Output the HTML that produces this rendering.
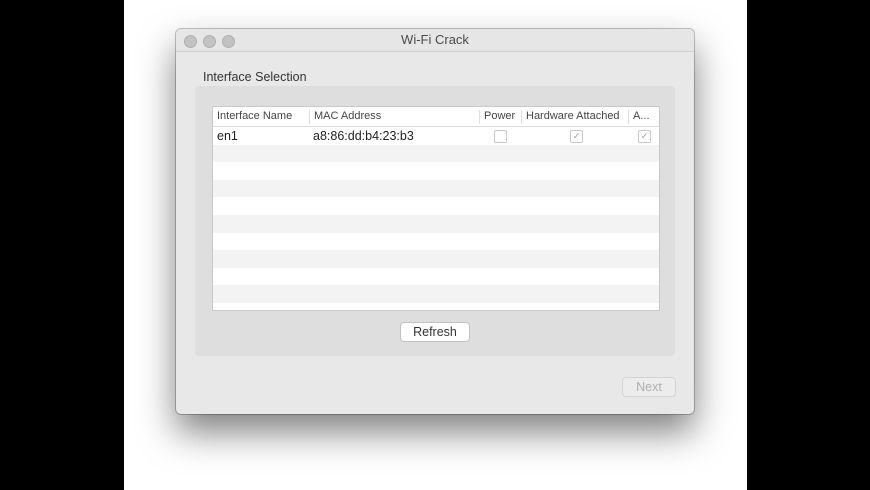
<!DOCTYPE html>
<html><head><style>
body{margin:0;width:870px;height:490px;background:#000;position:relative;overflow:hidden;font-family:"Liberation Sans",sans-serif}
.page{position:absolute;left:124px;top:0;width:623px;height:490px;background:#fff}
.win{position:absolute;left:176px;top:29px;width:518px;height:385px;background:#e8e8e8;border-radius:5px;box-shadow:0 18px 36px rgba(0,0,0,.5),0 0 0 1px #c4c4c4}
.tb{height:22px;border-bottom:1px solid #d0d0d0;background:#e6e6e6;border-radius:5px 5px 0 0;text-align:center;font-size:13px;line-height:22px;color:#4a4a4a}
.dot{position:absolute;top:6px;width:11px;height:11px;border-radius:50%;background:#c2c2c2;border:0.5px solid #b0b0b0}
.lbl{position:absolute;left:27px;top:41px;font-size:12.5px;color:#333}
.grp{position:absolute;left:19px;top:57px;width:480px;height:270px;background:#dedede;border-radius:4px}
.tbl{position:absolute;left:36px;top:77px;width:446px;height:203px;background:#fff;border:1px solid #c8c8c8;overflow:hidden}
.hd{height:19px;border-bottom:1px solid #ddd;font-size:11px;color:#444;position:relative}
.hd span{position:absolute;top:3px;padding-left:4px;border-left:1px solid #ddd;height:14px}
.row{height:17.6px;position:relative;font-size:12.5px;color:#222}
.row:nth-child(odd){background:#f3f3f3}
.cb{position:absolute;top:3px;width:11px;height:11px;border:1px solid #c8c8c8;border-radius:2px;background:#fff;font-size:9px;line-height:11px;text-align:center;color:#999}
.btn{position:absolute;background:#fff;border:1px solid #c2c2c2;border-radius:4px;font-size:12.5px;text-align:center;line-height:18px;color:#333}
</style></head><body>
<div class="page"></div>
<div class="win">
<div class="tb">Wi-Fi Crack</div>
<div class="dot" style="left:8px"></div><div class="dot" style="left:27px"></div><div class="dot" style="left:46px"></div>
<div class="lbl">Interface Selection</div>
<div class="grp"></div>
<div class="tbl">
<div class="hd"><span style="left:0;border:none">Interface Name</span><span style="left:96px">MAC Address</span><span style="left:266px">Power</span><span style="left:308px">Hardware Attached</span><span style="left:415px">A...</span></div>
<div class="row" style="background:#fff"><span style="position:absolute;left:4px;top:2px">en1</span><span style="position:absolute;left:100px;top:2px">a8:86:dd:b4:23:b3</span><div class="cb" style="left:281px"></div><div class="cb" style="left:357px">✓</div><div class="cb" style="left:425px">✓</div></div>
<div class="row"></div><div class="row" style="background:#fff"></div><div class="row"></div><div class="row" style="background:#fff"></div><div class="row"></div><div class="row" style="background:#fff"></div><div class="row"></div><div class="row" style="background:#fff"></div><div class="row"></div><div class="row" style="background:#fff"></div>
</div>
<div class="btn" style="left:224px;top:293px;width:68px;height:18px">Refresh</div>
<div class="btn" style="left:446px;top:348px;width:52px;height:18px;color:#b0b0b0;background:#ececec;border-color:#d4d4d4">Next</div>
</div>
</body></html>
